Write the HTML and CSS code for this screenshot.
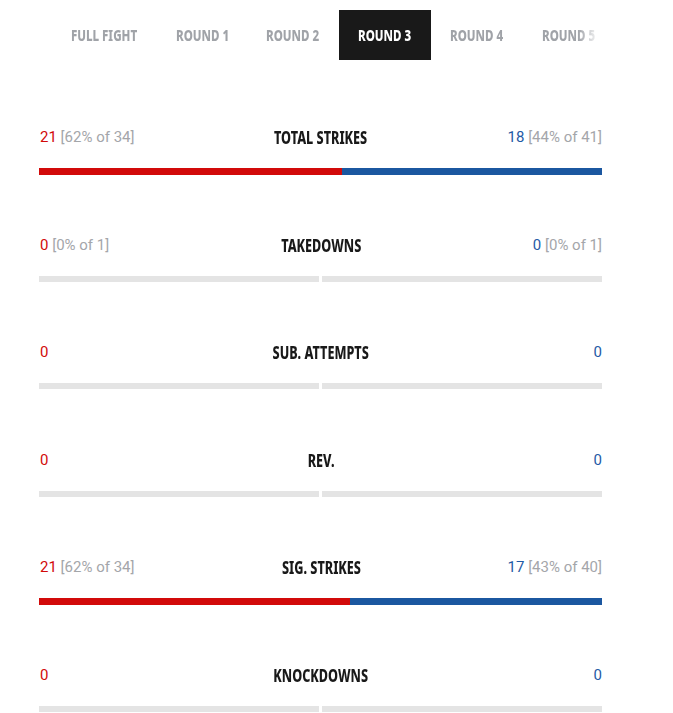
FILE: index.html
```html
<!DOCTYPE html>
<html>
<head>
<meta charset="utf-8">
<link rel="stylesheet" href="styles.css">
</head>
<body>
<nav class="tabs">
  <a class="tab wide"><span class="tab-text">FULL FIGHT</span></a>
  <a class="tab narrow"><span class="tab-text">ROUND 1</span></a>
  <a class="tab"><span class="tab-text">ROUND 2</span></a>
  <a class="tab active"><span class="tab-text">ROUND 3</span></a>
  <a class="tab"><span class="tab-text">ROUND 4</span></a>
  <a class="tab"><span class="tab-text">ROUND 5</span></a>
</nav>
<section class="stats">
  <div class="stat">
    <div class="line">
      <span class="val"><span class="red">21</span> [62% of 34]</span>
      <span class="label">TOTAL STRIKES</span>
      <span class="val right"><span class="blue">18</span> [44% of 41]</span>
    </div>
    <div class="bar"><div class="fill-red" style="width:53.85%"></div><div class="fill-blue"></div></div>
  </div>
  <div class="stat">
    <div class="line">
      <span class="val"><span class="red">0</span> [0% of 1]</span>
      <span class="label">TAKEDOWNS</span>
      <span class="val right"><span class="blue">0</span> [0% of 1]</span>
    </div>
    <div class="bar empty"><div class="half"></div><div class="half"></div></div>
  </div>
  <div class="stat">
    <div class="line">
      <span class="val"><span class="red">0</span></span>
      <span class="label">SUB. ATTEMPTS</span>
      <span class="val right"><span class="blue">0</span></span>
    </div>
    <div class="bar empty"><div class="half"></div><div class="half"></div></div>
  </div>
  <div class="stat">
    <div class="line">
      <span class="val"><span class="red">0</span></span>
      <span class="label">REV.</span>
      <span class="val right"><span class="blue">0</span></span>
    </div>
    <div class="bar empty"><div class="half"></div><div class="half"></div></div>
  </div>
  <div class="stat">
    <div class="line">
      <span class="val"><span class="red">21</span> [62% of 34]</span>
      <span class="label">SIG. STRIKES</span>
      <span class="val right"><span class="blue">17</span> [43% of 40]</span>
    </div>
    <div class="bar"><div class="fill-red" style="width:55.26%"></div><div class="fill-blue"></div></div>
  </div>
  <div class="stat">
    <div class="line">
      <span class="val"><span class="red">0</span></span>
      <span class="label">KNOCKDOWNS</span>
      <span class="val right"><span class="blue">0</span></span>
    </div>
    <div class="bar empty"><div class="half"></div><div class="half"></div></div>
  </div>
</section>
</body>
</html>
```
FILE: styles.css
```css
html, body {
  margin: 0;
  padding: 0;
  background: #fff;
}
body {
  width: 673px;
  height: 713px;
  overflow: hidden;
}
.tabs {
  display: flex;
  margin-top: 10px;
  padding-left: 51px;
  height: 50px;
  overflow: hidden;
  -webkit-mask-image: linear-gradient(to right, #000 578px, transparent 600px);
  mask-image: linear-gradient(to right, #000 578px, transparent 600px);
}
.tab {
  flex: none;
  width: 92px;
  display: flex;
  align-items: center;
  justify-content: center;
  padding-bottom: 1px;
  box-sizing: border-box;
  font-family: "Noto Sans", sans-serif;
  font-weight: 800;
  font-size: 15px;
  color: #a0a3a8;
  white-space: nowrap;
}
.tab.wide { width: 107px; }
.tab.narrow { width: 89px; }
.tab-text {
  display: inline-block;
  transform: scaleX(0.77);
}
.tab.active {
  background: #191919;
  color: #fff;
}
.stats {
  margin: 0 71px 0 39px;
  padding-top: 67px;
}
.stat {
  height: 107.5px;
}
.line {
  display: flex;
  align-items: center;
  justify-content: space-between;
  height: 20px;
}
.val {
  flex: 1;
  font-family: Roboto, "Noto Sans", sans-serif;
  font-size: 15px;
  color: #a4a6aa;
  padding-left: 1px;
}
.val.right {
  text-align: right;
  padding-left: 0;
}
.red { color: #d20a0a; }
.blue { color: #1f5aa5; }
.label {
  flex: none;
  display: inline-block;
  transform: scaleX(0.7);
  font-family: "Noto Sans", sans-serif;
  font-weight: 800;
  font-size: 18px;
  color: #191919;
}
.bar {
  display: flex;
  margin-top: 21px;
  height: 7px;
}
.fill-red {
  background: #d20a0a;
}
.fill-blue {
  flex: 1;
  background: #1b57a0;
}
.bar.empty {
  height: 6px;
  gap: 3px;
}
.half {
  flex: 1;
  background: #e4e4e4;
}
```
